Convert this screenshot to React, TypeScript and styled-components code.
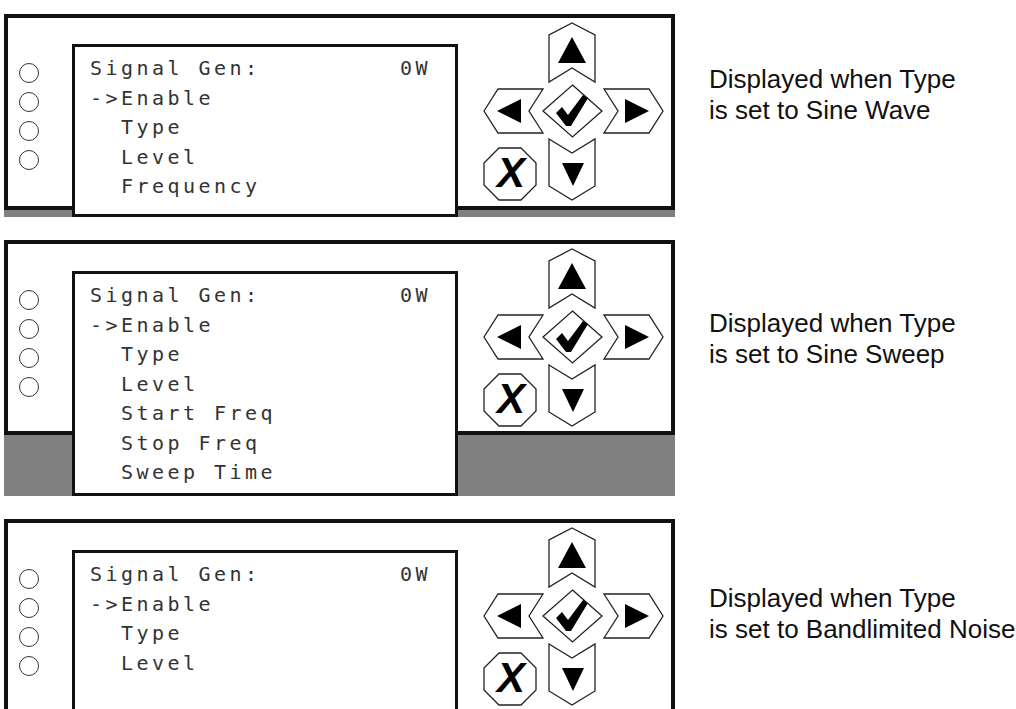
import React from 'react'
import styled, { createGlobalStyle } from 'styled-components';

const GlobalStyle = createGlobalStyle`
  html, body {
    margin: 0;
    padding: 0;
    background: #fff;
    overflow: hidden;
  }
`;

// 패널 데이터
const panelData = [
  {
    id: 1,
    lines: ["Signal Gen:         0W", "->Enable", "  Type", "  Level", "  Frequency"],
    rows: "30px 166px 7px",
    base: true,
    caption: ["Displayed when Type", "is set to Sine Wave"],
    captionTop: 50,
  },
  {
    id: 2,
    lines: ["Signal Gen:         0W", "->Enable", "  Type", "  Level", "  Start Freq", "  Stop Freq", "  Sweep Time"],
    rows: "31px 164px 61px",
    base: true,
    caption: ["Displayed when Type", "is set to Sine Sweep"],
    captionTop: 68,
  },
  {
    id: 3,
    lines: ["Signal Gen:         0W", "->Enable", "  Type", "  Level"],
    rows: "31px 142px 40px",
    base: false,
    caption: ["Displayed when Type", "is set to Bandlimited Noise"],
    captionTop: 64,
  },
];

function KeypadIcon() {
  return (
    <svg width="182" height="180" viewBox="0 0 182 180">
      <g fill="#fff" stroke="#222" strokeWidth="1.3" strokeLinejoin="miter">
        <polygon points="89,1 112,13 112,60 89,46 66,60 66,13" />
        <polygon points="66,117 89,131 112,117 112,164 89,178 66,164" />
        <polygon points="1,89 15,67 60,67 46,89 60,111 15,111" />
        <polygon points="121,67 166,67 180,89 166,111 121,111 135,89" />
        <polygon points="89.5,63 119,89 89.5,115 60,89" />
        <polygon points="16,126 38,126 53,141 53,163 38,178 16,178 1,163 1,141" />
      </g>
      <g fill="#000">
        <polygon points="89,15 103,41 75,41" />
        <polygon points="79,141 101,141 90,164" />
        <polygon points="14,89 38,77 38,101" />
        <polygon points="142,77 166,89 142,101" />
        <path d="M73,91 L79,85 L85,93 L100,73 L105,76 L88,104 L83,104 Z" />
        <text
          x="28"
          y="165"
          textAnchor="middle"
          fontFamily="'Liberation Sans', Arial, sans-serif"
          fontWeight="bold"
          fontStyle="italic"
          fontSize="42"
        >X</text>
      </g>
    </svg>
  );
}

export default function App() {
  return (
    <>
      <GlobalStyle />
      <Page>
        {panelData.map(({ id, lines, rows, base, caption, captionTop }) => (
          <Row key={id}>
            <Device $rows={rows}>
              <Frame $base={base} />
              {base && <Base />}
              <Lights>
                <Light />
                <Light />
                <Light />
                <Light />
              </Lights>
              <Screen>
                {lines.map((line, i) => (
                  <ScreenLine key={i}>{line}</ScreenLine>
                ))}
              </Screen>
              <Keypad>
                <KeypadIcon />
              </Keypad>
            </Device>
            <Caption $top={captionTop}>
              {caption.map((text) => (
                <div key={text}>{text}</div>
              ))}
            </Caption>
          </Row>
        ))}
      </Page>
    </>
  );
}

const Page = styled.div`
  display: flex;
  flex-direction: column;
  gap: 23px;
  padding: 14px 0 0 4px;
`;

const Row = styled.div`
  display: flex;
  align-items: flex-start;
`;

const Device = styled.div<{ $rows: string }>`
  display: grid;
  grid-template-columns: 68px 386px 1fr;
  grid-template-rows: ${({ $rows }) => $rows};
  width: 671px;
  flex-shrink: 0;
`;

const Frame = styled.div<{ $base: boolean }>`
  grid-column: 1 / -1;
  grid-row: ${({ $base }) => ($base ? "1 / 3" : "1 / -1")};
  border: 4px solid #111;
  border-bottom: ${({ $base }) => ($base ? "4px solid #111" : "none")};
  background: #fff;
`;

const Base = styled.div`
  grid-column: 1 / -1;
  grid-row: 3;
  background: #808080;
`;

const Lights = styled.div`
  grid-column: 1;
  grid-row: 2;
  display: flex;
  flex-direction: column;
  gap: 9px;
  padding: 19px 0 0 15px;
`;

const Light = styled.span`
  display: block;
  width: 20px;
  height: 20px;
  box-sizing: border-box;
  border: 1.2px solid #333;
  border-radius: 50%;
`;

const Screen = styled.div`
  grid-column: 2;
  grid-row: 2 / 4;
  border: 3px solid #111;
  background: #fff;
  padding: 7px 0 0 15px;
  overflow: hidden;
`;

const ScreenLine = styled.div`
  font-family: "DejaVu Sans Mono", "Liberation Mono", monospace;
  font-size: 20px;
  letter-spacing: 3.46px;
  line-height: 29.5px;
  height: 29.5px;
  color: #333;
  white-space: pre;
`;

const Keypad = styled.div`
  grid-column: 3;
  grid-row: 1 / 3;
  align-self: start;
  margin: 8px 0 0 25px;
  line-height: 0;
`;

const Caption = styled.div<{ $top: number }>`
  margin: ${({ $top }) => $top}px 0 0 34px;
  font-family: "Liberation Sans", Arial, sans-serif;
  font-size: 26px;
  line-height: 31px;
  color: #111;
  white-space: nowrap;
`;
